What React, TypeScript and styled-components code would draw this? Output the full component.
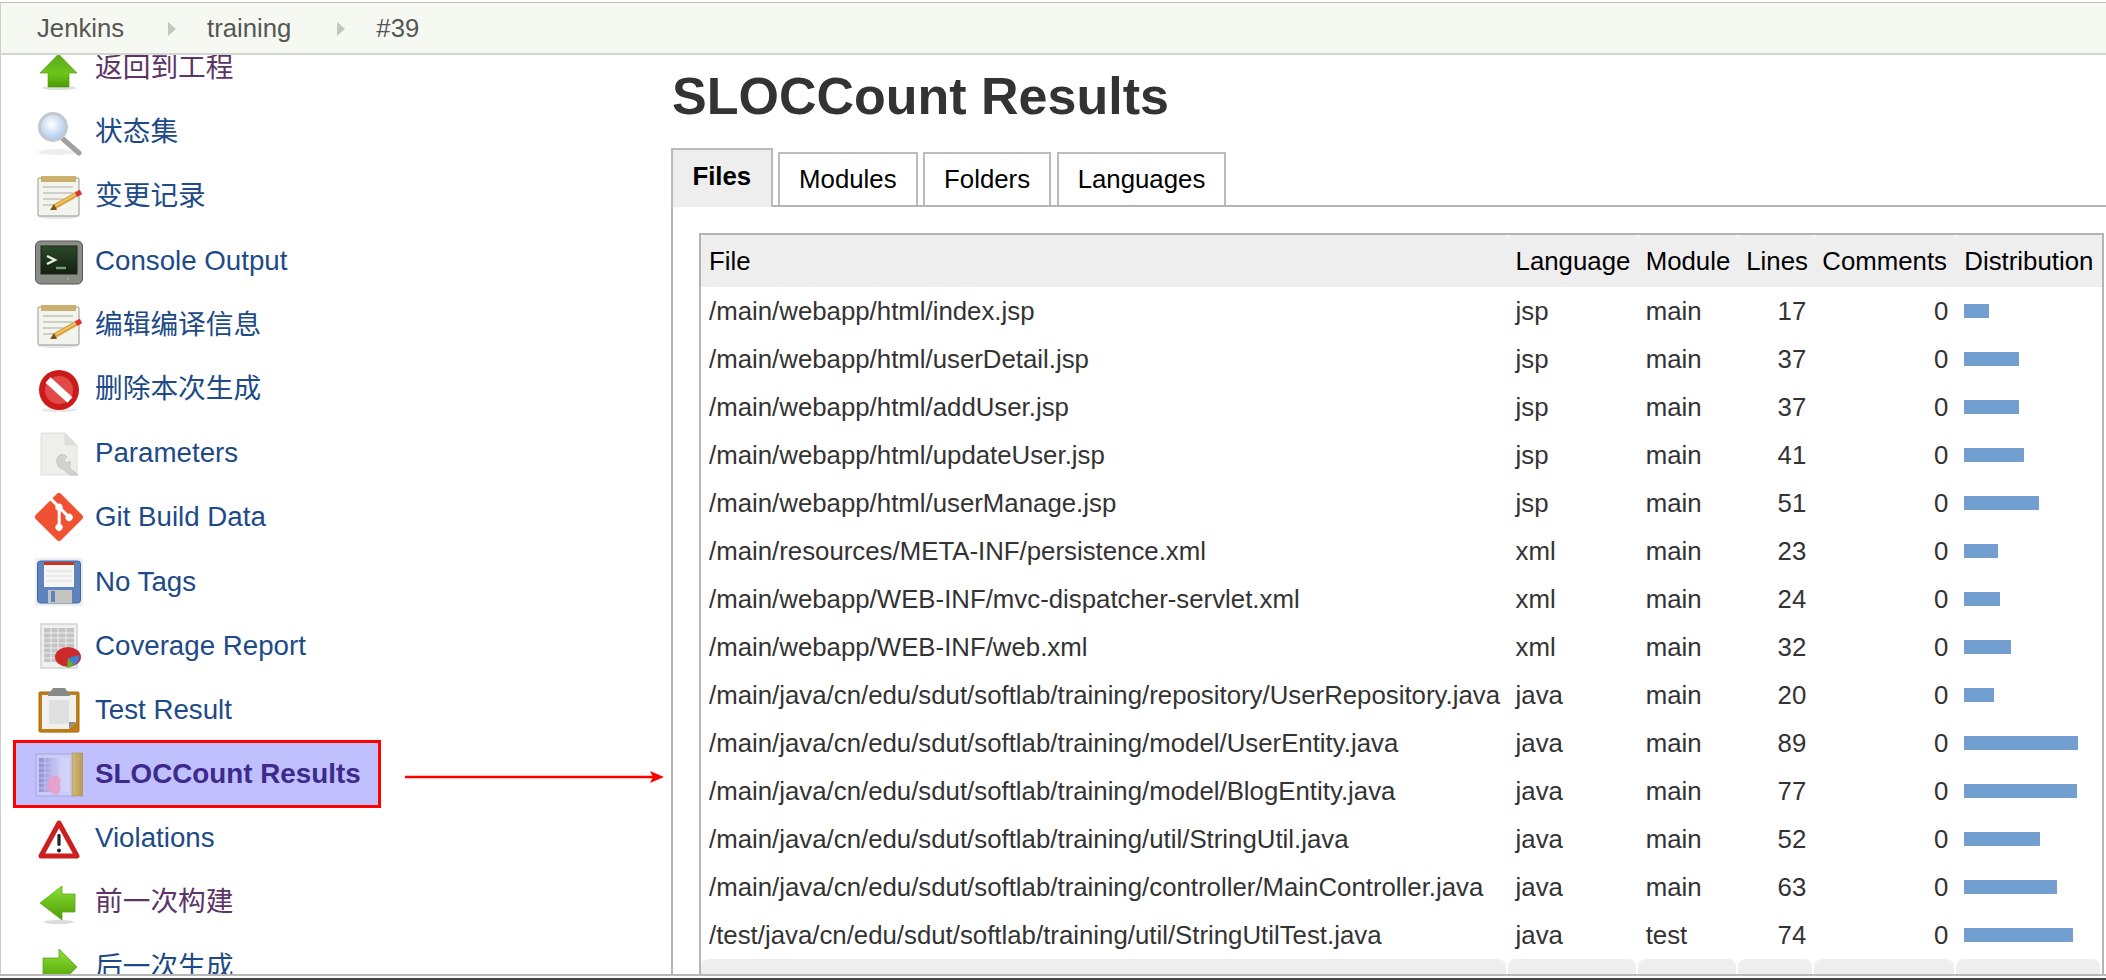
import React from 'react';
import styled, { createGlobalStyle } from 'styled-components';

const Global = createGlobalStyle`
  html, body { margin: 0; padding: 0; background: #fff; }
  body { font-family: "Liberation Sans", "Noto Sans CJK SC", Arial, sans-serif; overflow: hidden; }
`;

const Page = styled.div`
  width: 2106px; height: 980px; overflow: hidden; position: relative;
  display: flex; flex-direction: column; background: #fff;
`;
const Breadcrumb = styled.nav`
  box-sizing: border-box; flex: none; margin-top: 2px; height: 53px;
  background: #f6f8f2; border-top: 1px solid #bdbdbd; border-bottom: 2px solid #d3d7cf;
  border-left: 1px solid #ccc; display: flex; align-items: center; padding: 2px 0 0 36px;
  font-size: 25.7px; color: #555753;
`;
const Crumb = styled.span`line-height: 1;`;
const CrumbArrow = styled.span<{ $lead: number }>`
  width: 0; height: 0; margin: 0 31px 0 ${p => p.$lead}px;
  border-left: 8px solid #c4c6c0; border-top: 7px solid transparent; border-bottom: 7px solid transparent;
`;
const Body = styled.div`flex: 1; display: flex; min-height: 0;`;
const Sidebar = styled.aside`
  box-sizing: border-box; flex: none; width: 671px; overflow: hidden; border-left: 1px solid #ccc;
`;
const NavList = styled.div`margin-top: -19px; display: flex; flex-direction: column;`;
const NavItem = styled.a<{ $visited?: boolean }>`
  flex: none; height: 64.2px; display: flex; align-items: center; gap: 12px; padding-left: 34px;
  font-size: 27.7px; color: ${p => (p.$visited ? '#5c3566' : '#204a87')};
`;
const CjkLabel = styled.span`padding-bottom: 1px; line-height: 1.2;`;
const ActiveItem = styled.a`
  box-sizing: border-box; flex: none; width: 368px; height: 68px; margin: -2px 0 -1.8px 12px;
  display: flex; align-items: center; gap: 12px; padding-left: 19px;
  background: #c0c0ff; border: 3px solid #ff0000;
  font-size: 27.8px; font-weight: bold; color: #3c2a8c;
`;
const IconSvg = styled.svg`flex: none; width: 48px; height: 48px; filter: blur(0.45px);`;
const Main = styled.main`flex: 1; min-width: 0; overflow: hidden; display: flex; flex-direction: column;`;
const Title = styled.h1`
  margin: 11px 0 22px 1px; font-size: 52px; line-height: 60px; font-weight: bold; color: #333;
`;
const Tabs = styled.div`
  flex: none; display: flex; align-items: flex-end; gap: 5.5px; height: 59px; box-sizing: border-box;
  border-bottom: 2px solid #b4b4b4;
`;
const Tab = styled.div`
  box-sizing: border-box; height: 53px; padding: 0 19px; display: flex; align-items: center;
  background: #fff; border: 2px solid #bbb; border-bottom: none; font-size: 25.8px; color: #000;
`;
const ActiveTab = styled(Tab)`
  height: 59px; margin-bottom: -2px; padding: 0 19.4px 4px; background: #eee; font-weight: bold;
`;
const Pane = styled.div`
  flex: 1; min-height: 0; border-left: 2px solid #b4b4b4; padding: 26px 2px 0 26px; overflow: hidden;
`;
const Table = styled.table`
  box-sizing: border-box; width: 1405px; table-layout: fixed; border-collapse: separate; border-spacing: 0;
  border: 2px solid #b4b4b4; border-bottom: none; font-size: 25.8px; color: #333;
`;
const HeadCell = styled.th<{ $w: number }>`
  box-sizing: border-box; width: ${p => p.$w}px; height: 52px; padding: 0 0 0 8px; background: #eee;
  border-radius: 3px 3px 0 0; font-weight: normal; color: #000; text-align: left; white-space: nowrap;
`;
const Cell = styled.td<{ $right?: boolean }>`
  height: 48px; padding: 0 8px; white-space: nowrap; text-align: ${p => (p.$right ? 'right' : 'left')};
`;
const Bar = styled.div`height: 14px; background: #729fcf;`;
const FootCell = styled.td`padding: 0;`;
const FootBlock = styled.div`height: 40px; margin-right: 2px; background: #eee; border-radius: 8px 8px 0 0;`;
const BottomEdge = styled.div`
  flex: none; height: 6px; box-sizing: border-box; background: #fafafa;
  border-top: 2px solid #b8b8b8; border-bottom: 2px solid #444;
`;
const Annotation = styled.svg`position: absolute; left: 405px; top: 770px; width: 260px; height: 14px;`;

type IconProps = { children: React.ReactNode };
const Icon = ({ children }: IconProps) => <IconSvg viewBox="0 0 48 48">{children}</IconSvg>;

const UpArrow = () => (
  <Icon>
    <defs><linearGradient id="gu" x1="0" y1="0" x2="0" y2="1"><stop offset="0" stopColor="#5da81f" /><stop offset="0.6" stopColor="#6cc51a" /><stop offset="1" stopColor="#4e9a06" /></linearGradient></defs>
    <ellipse cx="24" cy="44" rx="17" ry="2" fill="#ddd" />
    <polygon points="23.5,10 42,29 34,29 34,43 13,43 13,29 5,29" fill="url(#gu)" stroke="#4e9a06" strokeWidth="0.6" />
  </Icon>
);
const LeftArrow = () => (
  <Icon>
    <defs><linearGradient id="gl" x1="0" y1="0" x2="0" y2="1"><stop offset="0" stopColor="#8ae234" /><stop offset="1" stopColor="#4e9a06" /></linearGradient></defs>
    <ellipse cx="24" cy="43" rx="15" ry="2" fill="#ddd" />
    <polygon points="5,24 27,7 27,15 40,15 40,33 27,33 27,41" fill="url(#gl)" stroke="#5ea61a" strokeWidth="0.8" />
  </Icon>
);
const RightArrow = () => (
  <Icon>
    <defs><linearGradient id="gr" x1="0" y1="0" x2="0" y2="1"><stop offset="0" stopColor="#8ae234" /><stop offset="1" stopColor="#4e9a06" /></linearGradient></defs>
    <polygon points="42,24 24,6 24,15 8,15 8,33 24,33 24,42" fill="url(#gr)" stroke="#5ea61a" strokeWidth="0.8" />
  </Icon>
);
const Magnifier = () => (
  <Icon>
    <defs><radialGradient id="gm" cx="0.45" cy="0.4" r="0.6"><stop offset="0" stopColor="#fff" /><stop offset="1" stopColor="#a9c8ea" /></radialGradient></defs>
    <ellipse cx="22" cy="44" rx="19" ry="3" fill="#eee" />
    <line x1="28" y1="31" x2="44" y2="45" stroke="#a0a0a0" strokeWidth="5" strokeLinecap="round" />
    <circle cx="18" cy="19" r="13.5" fill="url(#gm)" stroke="#c4c8cc" strokeWidth="3" />
  </Icon>
);
const Notepad = () => (
  <Icon>
    <ellipse cx="23" cy="45" rx="20" ry="2" fill="#e6e6e6" />
    <rect x="3" y="6" width="41" height="38" rx="2" fill="#f4f4ee" stroke="#b4b4ac" strokeWidth="1.4" />
    <rect x="6" y="4" width="35" height="6" fill="#c9b06e" />
    <path d="M8 15h30M8 21h30M8 27h20M8 33h12" stroke="#cfcfca" strokeWidth="2" />
    <line x1="19" y1="35" x2="42" y2="22" stroke="#dca544" strokeWidth="5" />
    <line x1="20" y1="34" x2="41" y2="22" stroke="#f0cf7a" strokeWidth="1.4" />
    <line x1="41" y1="22.5" x2="46" y2="20" stroke="#e03030" strokeWidth="5" />
    <polygon points="15,38 19,32 22,38" fill="#7a5520" />
  </Icon>
);
const Terminal = () => (
  <Icon>
    <defs><linearGradient id="gt" x1="0" y1="0" x2="0" y2="1"><stop offset="0" stopColor="#2a4a2a" /><stop offset="1" stopColor="#14200f" /></linearGradient></defs>
    <rect x="0.5" y="4" width="47" height="43" rx="5" fill="#8a8c86" stroke="#555" strokeWidth="1" />
    <rect x="6" y="9" width="36" height="28" fill="url(#gt)" stroke="#222" />
    <path d="M12 19l8 4-8 4" fill="none" stroke="#e8f0e0" strokeWidth="2.4" />
    <line x1="21" y1="31" x2="31" y2="31" stroke="#7a9a7a" strokeWidth="2.4" />
    <circle cx="33" cy="42" r="1" fill="#7fd04a" />
  </Icon>
);
const NoEntry = () => (
  <Icon>
    <ellipse cx="24" cy="45" rx="18" ry="2" fill="#e8e8e8" />
    <circle cx="24" cy="25" r="20" fill="#cc1a1a" />
    <circle cx="24" cy="25" r="14" fill="#e24a4a" />
    <line x1="13" y1="15" x2="35" y2="35" stroke="#fff" strokeWidth="7.5" />
  </Icon>
);
const ParamDoc = () => (
  <Icon>
    <path d="M6 4h24l12 12v30H6z" fill="#eeeeea" stroke="#dedede" strokeWidth="1" />
    <path d="M30 4v12h12" fill="#dedede" stroke="#ddd" />
    <path d="M22 30c1-4 6-6 9-3l1 1-3 3 2 3 4-2c1 3 0 5-1 6l9 8h-8l-7-6c-4 0-7-5-6-10z" fill="#d2d2ce" stroke="#bdbdba" strokeWidth="0.8" />
  </Icon>
);
const GitLogo = () => (
  <IconSvg viewBox="0 0 92 92">
    <path fill="#f05133" d="M90.156 41.965 50.036 1.848a5.918 5.918 0 0 0-8.372 0l-8.328 8.332 10.566 10.566a7.03 7.03 0 0 1 7.23 1.684 7.034 7.034 0 0 1 1.669 7.277l10.187 10.184a7.028 7.028 0 0 1 7.278 1.672 7.04 7.04 0 0 1 0 9.957 7.05 7.05 0 0 1-9.965 0 7.044 7.044 0 0 1-1.528-7.66l-9.5-9.497V59.36a7.04 7.04 0 0 1 1.86 11.29 7.04 7.04 0 0 1-9.957 0 7.04 7.04 0 0 1 0-9.958 7.06 7.06 0 0 1 2.304-1.539V33.926a7.049 7.049 0 0 1-3.82-9.234L29.242 14.272 1.73 41.777a5.925 5.925 0 0 0 0 8.371L41.852 90.27a5.925 5.925 0 0 0 8.37 0l39.934-39.934a5.925 5.925 0 0 0 0-8.371" />
  </IconSvg>
);
const Floppy = () => (
  <Icon>
    <rect x="0" y="0" width="48" height="48" fill="#eeeeee" />
    <rect x="2.5" y="3" width="43" height="42" rx="3" fill="#5f84bd" stroke="#3f66a6" />
    <rect x="9" y="4" width="30" height="25" fill="#f6f6f6" />
    <rect x="9" y="4" width="30" height="3" fill="#d03020" />
    <path d="M11 13h26M11 18h26M11 23h26" stroke="#dcdcdc" />
    <rect x="13" y="32" width="24" height="13" fill="#c4c4c0" />
    <rect x="16" y="33" width="4" height="11" fill="#5f84bd" />
  </Icon>
);
const Coverage = () => (
  <Icon>
    <rect x="6" y="2" width="36" height="44" fill="#f0f0f0" stroke="#d4d4d4" strokeWidth="1.5" />
    <rect x="9" y="6" width="30" height="34" fill="#c4c4c4" />
    <path d="M9 11h30M9 16h30M9 21h30M9 26h30M9 31h30M9 36h30M16 6v34M23 6v34M31 6v34" stroke="#eeeeee" strokeWidth="1" />
    <ellipse cx="33" cy="35" rx="13" ry="10" fill="#cc2a2a" />
    <path d="M33 36l11-3a13 10 0 0 1-5 10z" fill="#3f7fd0" />
    <path d="M33 36l6 7a13 10 0 0 1-7 3z" fill="#5fb030" />
  </Icon>
);
const Clipboard = () => (
  <Icon>
    <ellipse cx="24" cy="46" rx="20" ry="1.6" fill="#e6e6e6" />
    <rect x="4" y="6" width="40" height="40" rx="1" fill="#c17d11" stroke="#a66d10" />
    <path d="M7 9h34v27l-7 7H7z" fill="#f0f0ee" />
    <path d="M14 14h20v24H14z" fill="#e0e0e0" />
    <path d="M34 43l7-7h-7z" fill="#8d8d8d" />
    <path d="M18 2h12l2 3 3 2v3H13V7l3-2z" fill="#888a85" />
  </Icon>
);
const SlocIcon = () => (
  <Icon>
    <defs>
      <linearGradient id="gs" x1="0" y1="0" x2="1" y2="0"><stop offset="0" stopColor="#9090d4" /><stop offset="0.7" stopColor="#cfcff8" /><stop offset="1" stopColor="#d4d4fa" /></linearGradient>
      <linearGradient id="gb" x1="0" y1="0" x2="1" y2="0"><stop offset="0" stopColor="#d2b874" /><stop offset="1" stopColor="#b89a5c" /></linearGradient>
    </defs>
    <rect x="1" y="4" width="38" height="42" fill="#cbcbf6" stroke="#a8a8dc" />
    <rect x="4" y="8" width="30" height="34" fill="url(#gs)" />
    <path d="M4 13h20M4 18h20M4 23h20M4 28h16M4 33h12M4 38h12M10 8v34M17 8v34" stroke="#c2c2ee" />
    <path d="M22 25a12 11 0 0 0-10 11 12 11 0 0 0 10 9 10 10 0 0 0 3-10 10 10 0 0 0-3-10z" fill="#e4a2cc" />
    <rect x="37" y="3" width="11" height="43" fill="url(#gb)" stroke="#a89058" strokeWidth="0.6" />
  </Icon>
);
const Warning = () => (
  <Icon>
    <polygon points="24,9 42,42 6,42" fill="#fff" stroke="#cc2020" strokeWidth="5" strokeLinejoin="round" />
    <rect x="22.4" y="20" width="3.2" height="12" rx="1.4" fill="#222" />
    <circle cx="24" cy="36.5" r="2" fill="#222" />
  </Icon>
);

type Row = { file: string; lang: string; mod: string; lines: number; bar: number };
const rows: Row[] = [
  { file: '/main/webapp/html/index.jsp', lang: 'jsp', mod: 'main', lines: 17, bar: 25 },
  { file: '/main/webapp/html/userDetail.jsp', lang: 'jsp', mod: 'main', lines: 37, bar: 55 },
  { file: '/main/webapp/html/addUser.jsp', lang: 'jsp', mod: 'main', lines: 37, bar: 55 },
  { file: '/main/webapp/html/updateUser.jsp', lang: 'jsp', mod: 'main', lines: 41, bar: 60 },
  { file: '/main/webapp/html/userManage.jsp', lang: 'jsp', mod: 'main', lines: 51, bar: 75 },
  { file: '/main/resources/META-INF/persistence.xml', lang: 'xml', mod: 'main', lines: 23, bar: 34 },
  { file: '/main/webapp/WEB-INF/mvc-dispatcher-servlet.xml', lang: 'xml', mod: 'main', lines: 24, bar: 36 },
  { file: '/main/webapp/WEB-INF/web.xml', lang: 'xml', mod: 'main', lines: 32, bar: 47 },
  { file: '/main/java/cn/edu/sdut/softlab/training/repository/UserRepository.java', lang: 'java', mod: 'main', lines: 20, bar: 30 },
  { file: '/main/java/cn/edu/sdut/softlab/training/model/UserEntity.java', lang: 'java', mod: 'main', lines: 89, bar: 114 },
  { file: '/main/java/cn/edu/sdut/softlab/training/model/BlogEntity.java', lang: 'java', mod: 'main', lines: 77, bar: 113 },
  { file: '/main/java/cn/edu/sdut/softlab/training/util/StringUtil.java', lang: 'java', mod: 'main', lines: 52, bar: 76 },
  { file: '/main/java/cn/edu/sdut/softlab/training/controller/MainController.java', lang: 'java', mod: 'main', lines: 63, bar: 93 },
  { file: '/test/java/cn/edu/sdut/softlab/training/util/StringUtilTest.java', lang: 'java', mod: 'test', lines: 74, bar: 109 },
];
const columns: [string, number][] = [
  ['File', 806], ['Language', 130], ['Module', 100.5], ['Lines', 76], ['Comments', 142], ['Distribution', 145.5],
];

export default function App() {
  return (
    <Page>
      <Global />
      <Breadcrumb>
        <Crumb>Jenkins</Crumb><CrumbArrow $lead={44} />
        <Crumb>training</Crumb><CrumbArrow $lead={46} />
        <Crumb>#39</Crumb>
      </Breadcrumb>
      <Body>
        <Sidebar>
          <NavList>
            <NavItem $visited><UpArrow /><CjkLabel>返回到工程</CjkLabel></NavItem>
            <NavItem><Magnifier /><CjkLabel>状态集</CjkLabel></NavItem>
            <NavItem><Notepad /><CjkLabel>变更记录</CjkLabel></NavItem>
            <NavItem><Terminal />Console Output</NavItem>
            <NavItem><Notepad /><CjkLabel>编辑编译信息</CjkLabel></NavItem>
            <NavItem><NoEntry /><CjkLabel>删除本次生成</CjkLabel></NavItem>
            <NavItem><ParamDoc />Parameters</NavItem>
            <NavItem><GitLogo />Git Build Data</NavItem>
            <NavItem><Floppy />No Tags</NavItem>
            <NavItem><Coverage />Coverage Report</NavItem>
            <NavItem><Clipboard />Test Result</NavItem>
            <ActiveItem><SlocIcon />SLOCCount Results</ActiveItem>
            <NavItem><Warning />Violations</NavItem>
            <NavItem $visited><LeftArrow /><CjkLabel>前一次构建</CjkLabel></NavItem>
            <NavItem><RightArrow /><CjkLabel>后一次生成</CjkLabel></NavItem>
          </NavList>
        </Sidebar>
        <Main>
          <Title>SLOCCount Results</Title>
          <Tabs>
            <ActiveTab>Files</ActiveTab>
            <Tab>Modules</Tab>
            <Tab>Folders</Tab>
            <Tab>Languages</Tab>
          </Tabs>
          <Pane>
            <Table>
              <thead>
                <tr>{columns.map(([name, w]) => <HeadCell key={name} $w={w}>{name}</HeadCell>)}</tr>
              </thead>
              <tbody>
                {rows.map(r => (
                  <tr key={r.file}>
                    <Cell>{r.file}</Cell>
                    <Cell>{r.lang}</Cell>
                    <Cell>{r.mod}</Cell>
                    <Cell $right>{r.lines}</Cell>
                    <Cell $right>0</Cell>
                    <Cell><Bar style={{ width: r.bar }} /></Cell>
                  </tr>
                ))}
              </tbody>
              <tfoot>
                <tr>{columns.map(([name]) => <FootCell key={name}><FootBlock /></FootCell>)}</tr>
              </tfoot>
            </Table>
          </Pane>
        </Main>
      </Body>
      <BottomEdge />
      <Annotation viewBox="0 0 260 14">
        <line x1="0" y1="7" x2="250" y2="7" stroke="#ff0000" strokeWidth="2.6" />
        <polygon points="259,7 245,1 248,7 245,13" fill="#ff0000" />
      </Annotation>
    </Page>
  );
}
